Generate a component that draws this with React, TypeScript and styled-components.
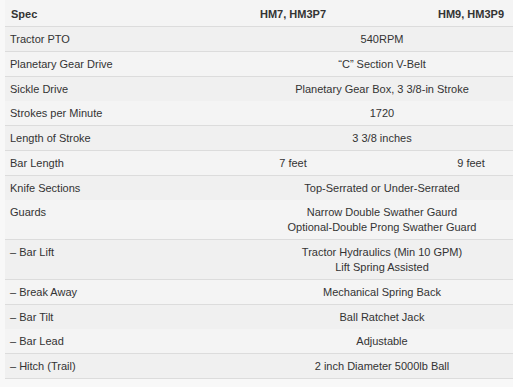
import React from "react";
import styled, { createGlobalStyle } from "styled-components";

const Global = createGlobalStyle`
  html, body {
    margin: 0;
    padding: 0;
    background: #f8f8f8;
    overflow: hidden;
  }
  body {
    font-family: "Liberation Sans", Arial, sans-serif;
    font-size: 11px;
    color: #333333;
  }
`;

const Page = styled.div`
  width: 513px;
  height: 387px;
  overflow: hidden;
  padding-left: 5px;
  box-sizing: border-box;
`;

const Table = styled.div`
  width: 555px;
  display: flex;
  flex-direction: column;
  border-bottom: 1px solid #dcdcdc;
`;

const Row = styled.div<{ $shade: string; $noBorder?: boolean }>`
  display: grid;
  grid-template-columns: 199px 178px 178px;
  background: ${(p) => p.$shade};
  border-top: ${(p) => (p.$noBorder ? "none" : "1px solid #dcdcdc")};
`;

const HeaderRow = styled.div`
  display: grid;
  grid-template-columns: 199px 178px 178px;
  background: #f4f4f4;
`;

const HeadCell = styled.div<{ $center?: boolean }>`
  padding: 7px 6px 4px;
  line-height: 15px;
  font-weight: bold;
  text-align: ${(p) => (p.$center ? "center" : "left")};
`;

const Label = styled.div`
  padding: 5px 5px 4px;
  line-height: 15px;
`;

const Value = styled.div<{ $span?: boolean }>`
  padding: 5px 5px 4px;
  line-height: 15px;
  text-align: center;
  grid-column: ${(p) => (p.$span ? "span 2" : "auto")};
`;

type Spec = {
  label: string;
  values: string[][];
  noBorder?: boolean;
};

const specs: Spec[] = [
  { label: "Tractor PTO", values: [["540RPM"]] },
  { label: "Planetary Gear Drive", values: [["“C” Section V-Belt"]] },
  { label: "Sickle Drive", values: [["Planetary Gear Box, 3 3/8-in Stroke"]] },
  { label: "Strokes per Minute", values: [["1720"]], noBorder: true },
  { label: "Length of Stroke", values: [["3 3/8 inches"]] },
  { label: "Bar Length", values: [["7 feet"], ["9 feet"]] },
  { label: "Knife Sections", values: [["Top-Serrated or Under-Serrated"]] },
  {
    label: "Guards",
    values: [["Narrow Double Swather Gaurd", "Optional-Double Prong Swather Guard"]],
    noBorder: true,
  },
  {
    label: "– Bar Lift",
    values: [["Tractor Hydraulics (Min 10 GPM)", "Lift Spring Assisted"]],
  },
  { label: "– Break Away", values: [["Mechanical Spring Back"]] },
  { label: "– Bar Tilt", values: [["Ball Ratchet Jack"]] },
  { label: "– Bar Lead", values: [["Adjustable"]], noBorder: true },
  { label: "– Hitch (Trail)", values: [["2 inch Diameter 5000lb Ball"]] },
];

export default function App() {
  return (
    <>
      <Global />
      <Page>
        <Table>
          <HeaderRow>
            <HeadCell>Spec</HeadCell>
            <HeadCell $center>HM7, HM3P7</HeadCell>
            <HeadCell $center>HM9, HM3P9</HeadCell>
          </HeaderRow>
          {specs.map((s, i) => (
            <Row
              key={s.label}
              $shade={i % 2 === 0 ? "#f0f0f0" : "#f4f4f4"}
              $noBorder={s.noBorder}
            >
              <Label>{s.label}</Label>
              {s.values.map((lines, j) => (
                <Value key={j} $span={s.values.length === 1}>
                  {lines.map((l, k) => (
                    <div key={k}>{l}</div>
                  ))}
                </Value>
              ))}
            </Row>
          ))}
        </Table>
      </Page>
    </>
  );
}
